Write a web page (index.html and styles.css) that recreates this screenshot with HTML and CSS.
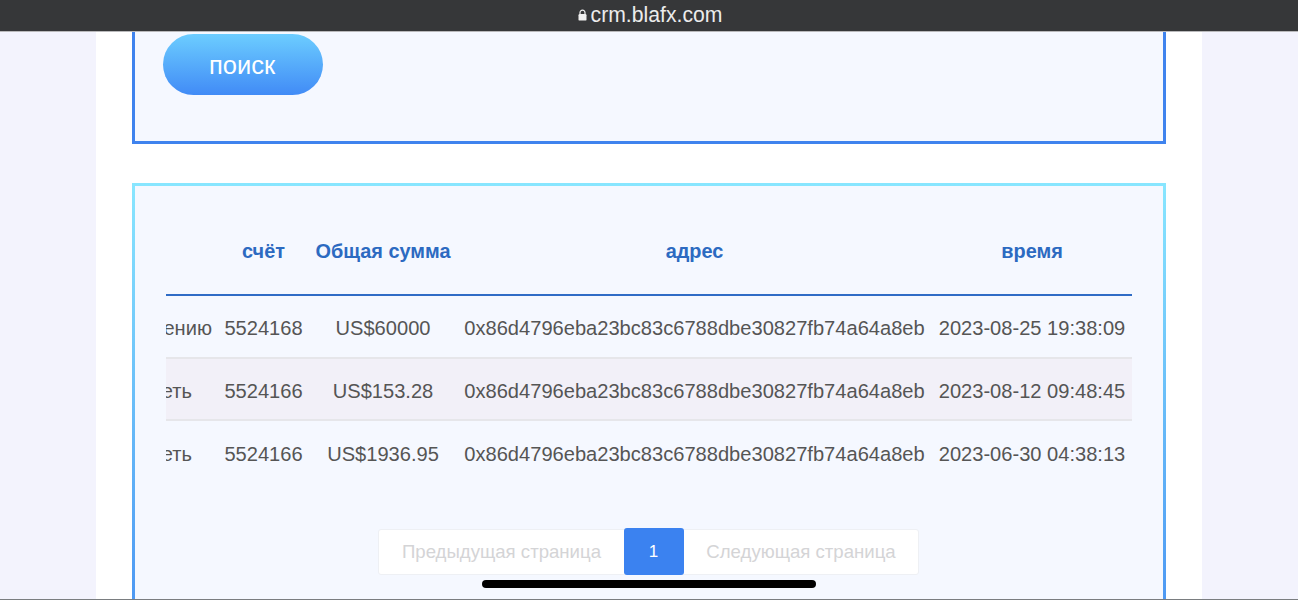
FILE: index.html
```html
<!DOCTYPE html>
<html lang="ru">
<head>
<meta charset="utf-8">
<title>crm.blafx.com</title>
<link rel="stylesheet" href="styles.css">
</head>
<body>
<header class="bar">
  <svg class="lock" width="9" height="12" viewBox="0 0 9 12"><path d="M2 5.5V3.6a2.5 2.5 0 0 1 5 0v1.9" fill="none" stroke="#f0f0f0" stroke-width="1.2"/><rect x="0.5" y="5" width="8" height="6.6" rx="1.2" fill="#f0f0f0"/></svg>
  <span class="url">crm.blafx.com</span>
</header>
<main class="page">
  <section class="card search">
    <button class="btn" type="button">поиск</button>
  </section>
  <section class="card results">
    <div class="row head">
      <div class="c first"></div><div class="c">счёт</div><div class="c">Общая сумма</div><div class="c">адрес</div><div class="c">время</div>
    </div>
    <div class="row">
      <div class="c first"><span>пополнению</span></div><div class="c">5524168</div><div class="c">US$60000</div><div class="c">0x86d4796eba23bc83c6788dbe30827fb74a64a8eb</div><div class="c">2023-08-25 19:38:09</div>
    </div>
    <div class="row alt">
      <div class="c first short"><span>посмотреть</span></div><div class="c">5524166</div><div class="c">US$153.28</div><div class="c">0x86d4796eba23bc83c6788dbe30827fb74a64a8eb</div><div class="c">2023-08-12 09:48:45</div>
    </div>
    <div class="row">
      <div class="c first short"><span>посмотреть</span></div><div class="c">5524166</div><div class="c">US$1936.95</div><div class="c">0x86d4796eba23bc83c6788dbe30827fb74a64a8eb</div><div class="c">2023-06-30 04:38:13</div>
    </div>
    <nav class="pager">
      <span class="pg prev">Предыдущая страница</span>
      <span class="pg num">1</span>
      <span class="pg next">Следующая страница</span>
    </nav>
  </section>
</main>
<div class="home"></div>
<div class="edge"></div>
</body>
</html>
```
FILE: styles.css
```css
* { box-sizing: border-box; }
html, body { margin: 0; height: 600px; overflow: hidden; }
body {
  background: #f3f3fd;
  font-family: "Liberation Sans", Arial, sans-serif;
  display: flex;
  flex-direction: column;
}
.bar {
  flex: none;
  height: 32px;
  background: #363739;
  border-bottom: 1px solid #b9b9bb;
  display: flex;
  align-items: center;
  justify-content: center;
  gap: 4px;
  color: #ececec;
  padding: 0 0 2px 2px;
}
.lock { margin-top: 1px; }
.url { font-size: 21.2px; line-height: 30px; }
.page {
  width: 1106px;
  margin: 0 0 0 96px;
  flex: 1;
  background: #fff;
  padding: 0 36px;
  overflow: hidden;
}
.card { background: #f5f8ff; }
.search {
  border: 3px solid #3f83ee;
  border-top: 0;
  padding: 2px 28px 46px;
}
.btn {
  display: block;
  width: 160px;
  height: 61px;
  border: 0;
  border-radius: 31px;
  background: linear-gradient(#6ccdff, #418bf6);
  color: #fff;
  font: 25.5px "Liberation Sans", Arial, sans-serif;
  padding: 2px 2px 0 0;
}
.results {
  margin-top: 39px;
  height: 520px;
  border: 3px solid;
  border-image: linear-gradient(#88e6ff, #3f86f0) 1;
  padding: 0 31px;
}
.row {
  display: grid;
  grid-template-columns: 52px 91px 148px 475px 200px;
  height: 62.5px;
  padding-top: 5px;
  align-items: center;
  color: #555;
  font-size: 20.1px;
  border-bottom: 2px solid #e6e6ea;
}
.row:nth-child(4) { border-bottom: 0; }
.c { text-align: center; white-space: nowrap; }
.first { overflow: hidden; display: flex; justify-content: flex-end; padding-right: 6px; }
.short { padding-right: 26px; }
.alt { background: #f2f0f8; }
.head {
  height: 110px;
  padding-top: 23px;
  border-bottom: 2px solid #2f6cc6;
  color: #2c6ac1;
  font-weight: 700;
  font-size: 19.9px;
}
.pager {
  display: flex;
  align-items: center;
  width: 541px;
  height: 46px;
  margin: 45.5px 0 0 212px;
  background: #fff;
  border: 1px solid #eef0f4;
  border-radius: 3px;
  color: #d4d4d6;
  font-size: 18.6px;
}
.pg { text-align: center; white-space: nowrap; }
.prev { width: 245px; }
.next { width: 234px; }
.num {
  width: 60px;
  height: 47px;
  margin-top: -1px;
  padding-right: 1px;
  line-height: 48px;
  background: #3b82f0;
  color: #fff;
  border-radius: 3px;
  font-size: 17px;
}
.home {
  position: absolute;
  left: 482px;
  top: 580px;
  width: 334px;
  height: 8px;
  border-radius: 4px;
  background: #000;
}
.edge {
  position: absolute;
  left: 0;
  right: 0;
  top: 599px;
  height: 1px;
  background: #7a7d80;
}
```
